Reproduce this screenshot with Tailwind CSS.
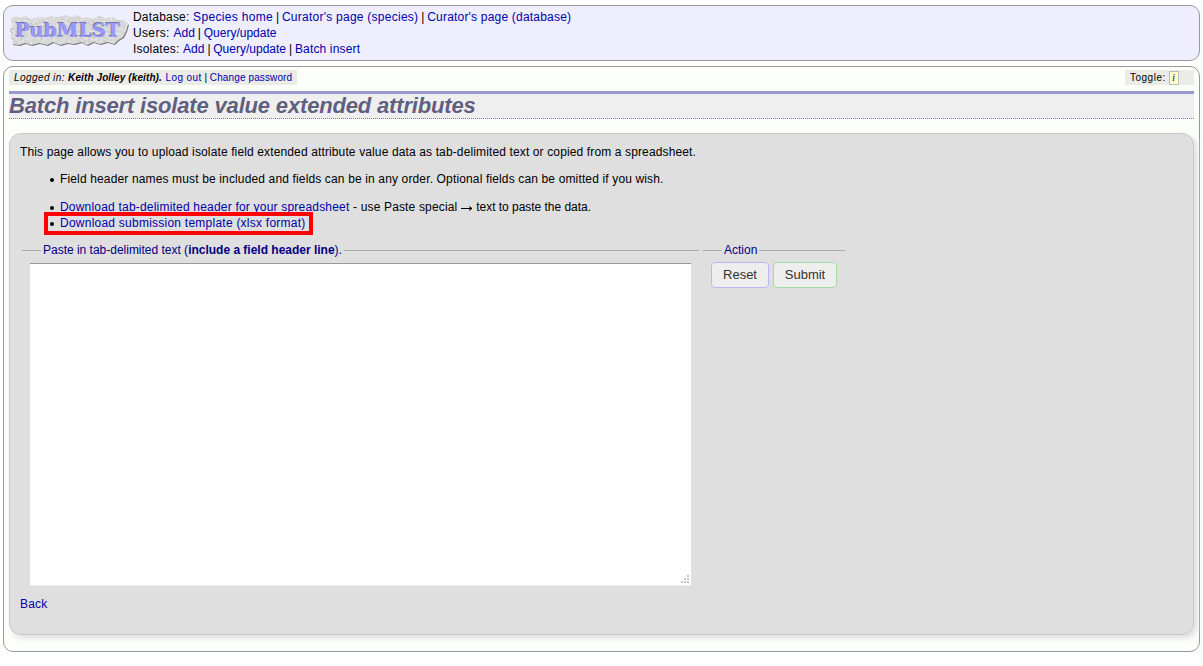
<!DOCTYPE html>
<html lang="en">
<head>
<meta charset="utf-8">
<title>Batch insert isolate value extended attributes</title>
<script src="https://cdn.jsdelivr.net/npm/@tailwindcss/browser@4"></script>
</head>
<body class="h-[666px] overflow-hidden bg-white pl-[3px] pr-[3px] pt-[5px] font-['Liberation_Sans',Arial,sans-serif] text-[12px] leading-4 text-black">
<header class="flex h-14 rounded-[10px] border border-[#999] bg-[#eeeeff] pl-[5px] pt-[3px]">
  <svg class="mt-[5px] mr-[3px] h-[34px] w-[121px] shrink-0" viewBox="0 0 121 34">
    <defs>
      <filter id="stone" x="0" y="0" width="100%" height="100%">
        <feTurbulence type="fractalNoise" baseFrequency="0.4" numOctaves="2" seed="4" result="n"/>
        <feColorMatrix in="n" type="matrix" values="0.3 0 0 0 0.63  0.3 0 0 0 0.63  0.3 0 0 0 0.63  0 0 0 0 1" color-interpolation-filters="sRGB" result="g"/>
        <feComposite in="g" in2="SourceGraphic" operator="in"/>
      </filter>
    </defs>
    <path d="M3 6 L8 3 L11 5 L18 3 L22 6 L30 4 L37 5 L42 3 L50 4 L56 2 L63 4 L69 2 L74 5 L80 4 L85 6 L91 3 L98 5 L105 4 L109 7 L115 7 L120 11 L118 18 L115 24 L110 27 L106 31 L99 29 L92 31 L85 29 L79 32 L73 29 L66 31 L59 30 L52 32 L45 29 L39 32 L31 30 L23 32 L17 30 L11 32 L4 31 L5 27 L2 24 L4 20 L1 17 L4 13 Z" fill="#777"/>
    <path d="M3 6 L8 3 L11 5 L18 3 L22 6 L30 4 L37 5 L42 3 L50 4 L56 2 L63 4 L69 2 L74 5 L80 4 L85 6 L91 3 L98 5 L105 4 L109 7 L115 7 L120 11 L118 18 L115 24 L110 27 L106 31 L99 29 L92 31 L85 29 L79 32 L73 29 L66 31 L59 30 L52 32 L45 29 L39 32 L31 30 L23 32 L17 30 L11 32 L4 31 L5 27 L2 24 L4 20 L1 17 L4 13 Z" fill="#ccc" transform="translate(-.8 -.9)" filter="url(#stone)"/>
    <g class="font-['DejaVu_Serif',serif] text-[18px] font-bold">
      <text x="5.6" y="22.4" textLength="105" lengthAdjust="spacingAndGlyphs" fill="#77779f">PubMLST</text>
      <text x="6.4" y="23" textLength="105" lengthAdjust="spacingAndGlyphs" fill="#9999ff">PubMLST</text>
    </g>
  </svg>
  <nav class="whitespace-nowrap text-[#0000aa]">
    <div><span class="text-black tracking-[.2px]">Database: </span><a class="tracking-[.33px]">Species home</a><span class="text-black tracking-[-.3px]"> | </span><a class="tracking-[.25px]">Curator's page (species)</a><span class="text-black tracking-[-.3px]"> | </span><a class="tracking-[.2px]">Curator's page (database)</a></div>
    <div><span class="text-black tracking-[.35px]">Users: </span><a>Add</a><span class="text-black tracking-[-.3px]"> | </span><a>Query/update</a></div>
    <div><span class="text-black tracking-[.2px]">Isolates: </span><a>Add</a><span class="text-black tracking-[-.3px]"> | </span><a>Query/update</a><span class="text-black tracking-[-.3px]"> | </span><a class="tracking-[.16px]">Batch insert</a></div>
  </nav>
</header>
<main class="mt-[5px] h-[586px] rounded-[10px] border border-[#999] bg-[#fcfff9] px-[5px] pt-[3px]">
  <div class="flex h-[15px] justify-between text-[10px] leading-[15px]">
    <div class="w-72 whitespace-nowrap bg-[#ebebe8] pl-[5px]"><i><span class="tracking-[.42px]">Logged in: </span><b class="tracking-[.1px]">Keith Jolley (keith).</b></i><span class="tracking-[.8px]"> </span><a class="tracking-[.4px] text-[#0000aa]">Log out</a> | <a class="tracking-[.12px] text-[#0000aa]">Change password</a></div>
    <div class="flex w-[69px] bg-[#ebebe8] pl-[5px]"><span class="tracking-[.5px]">Toggle:</span><span class="ml-[3px] mt-px h-[14px] w-[10px] border border-[#bbb] bg-[#ffffcc] text-center font-['Liberation_Serif',serif] leading-3 italic">i</span></div>
  </div>
  <h1 class="mt-[6px] h-7 border-t-3 border-b border-t-[#9999cc] border-b-[#7777bb] [border-bottom-style:dotted] bg-[#efefef] text-[22px] leading-[23px] font-bold italic tracking-[-.17px] text-[#5f5f80]">Batch insert isolate value extended attributes</h1>
  <section class="mt-[14px] h-[502px] rounded-[12px] border border-[#c8c8c8] bg-[#dfdfdf] px-[10px] pt-[10px] shadow-[3px_3px_6px_#ddd]">
    <p class="tracking-[.129px]">This page allows you to upload isolate field extended attribute value data as tab-delimited text or copied from a spreadsheet.</p>
    <ul class="mt-[11px]">
      <li class="flex items-center pl-[30px]"><i class="mt-[2px] mr-[6px] size-1 rounded-full bg-black"></i><span class="tracking-[.143px]">Field header names must be included and fields can be in any order. Optional fields can be omitted if you wish.</span></li>
    </ul>
    <ul class="mt-3">
      <li class="flex items-center pl-[30px]"><i class="mt-[2px] mr-[6px] size-1 rounded-full bg-black"></i><a class="tracking-[.2px] text-[#0000aa]">Download tab-delimited header for your spreadsheet</a><span class="whitespace-pre tracking-[.16px]"> - use Paste special </span><svg class="mt-[2px] h-[7px] w-3" viewBox="0 0 12 7"><path d="M0 3.5H11M8 1.5L11 3.5L8 5.5" fill="none" stroke="#000"/></svg><span class="whitespace-pre tracking-[-.03px]"> text to paste the data.</span></li>
      <li class="relative flex items-center pl-[30px]"><i class="mt-[2px] mr-[6px] size-1 rounded-full bg-black"></i><a class="tracking-[.24px] text-[#0000aa]">Download submission template (xlsx format)</a><span class="absolute -top-[3px] left-6 h-[23px] w-[269px] border-4 border-[#ff0000]"></span></li>
    </ul>
    <div class="mt-[11px] flex gap-1 pl-[2px] text-[#000080]">
      <div class="w-[677px]">
        <div class="flex items-center whitespace-nowrap"><i class="mr-[2px] h-px w-[19px] bg-[#aaa]"></i><span class="tracking-[-.01px]">Paste in tab-delimited text (<b>include a field header line</b>).</span><i class="ml-[2px] h-px flex-1 bg-[#aaa]"></i></div>
        <div class="mt-[5px] ml-2 flex h-[323px] w-[661px] items-end justify-end border-t border-[#999] border-b border-b-[#e3e9ef] bg-white pr-[2px] pb-[2px]">
          <svg class="size-2" viewBox="0 0 8 8"><path d="M6 0h2v2h-2zM3 3h2v2h-2zM6 3h2v2h-2zM0 6h2v2h-2zM3 6h2v2h-2zM6 6h2v2h-2z" fill="#c4c4c4"/></svg>
        </div>
      </div>
      <div class="w-[142px]">
        <div class="flex items-center"><i class="mr-[2px] h-px w-[19px] bg-[#aaa]"></i><span>Action</span><i class="ml-[2px] h-px flex-1 bg-[#aaa]"></i></div>
        <div class="mt-1 ml-2 flex gap-1 text-[13px] text-[#333]">
          <button class="h-[26px] w-[58px] rounded-[4px] border border-[#b8b8ee] bg-[#eeeeee]">Reset</button>
          <button class="h-[26px] w-[64px] rounded-[4px] border border-[#a5dba5] bg-[#eeeeee]">Submit</button>
        </div>
      </div>
    </div>
    <div class="mt-[10px] tracking-[.15px] text-[#0000aa]">Back</div>
  </section>
</main>
</body>
</html>
